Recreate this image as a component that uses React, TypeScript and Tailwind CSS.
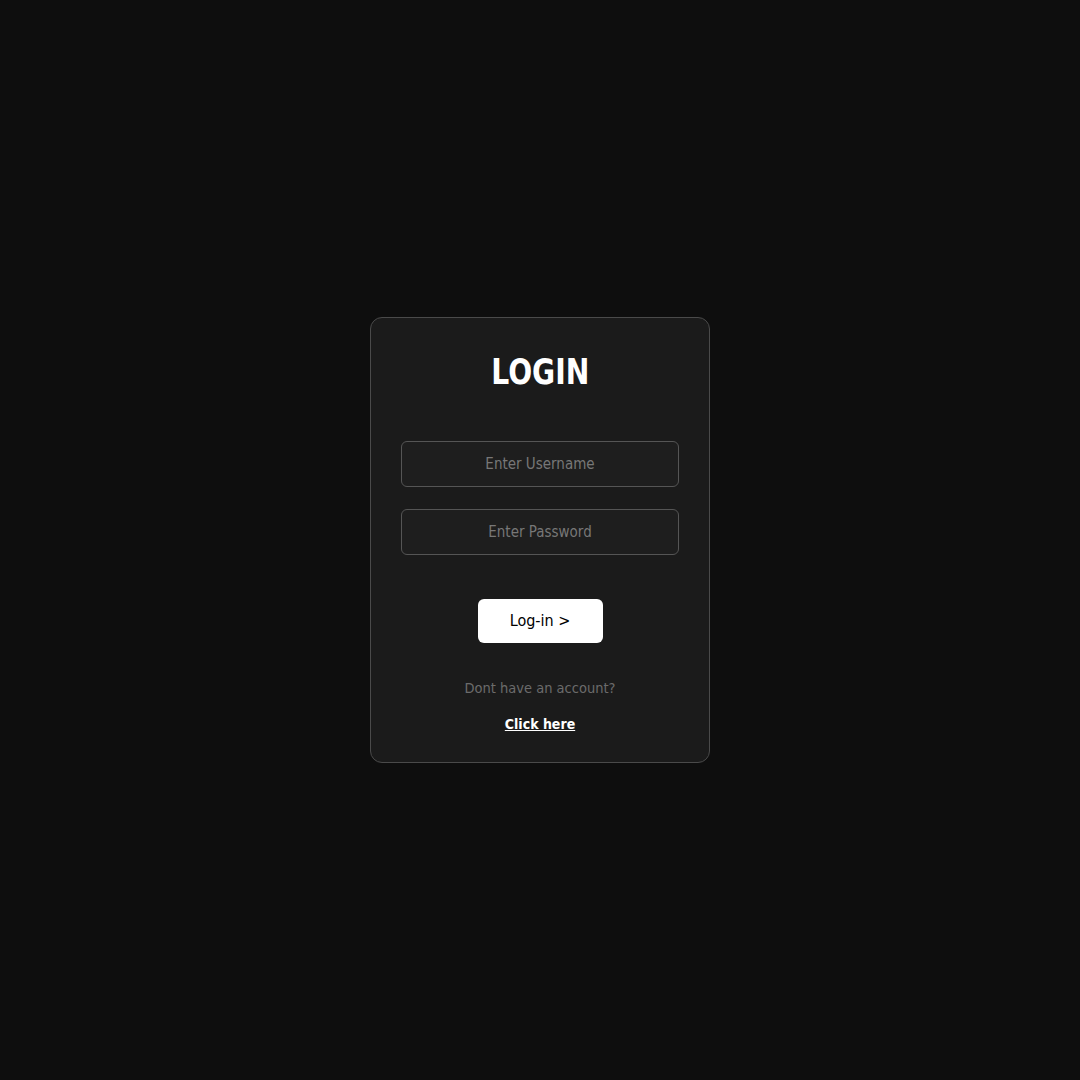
export default function App() {
  return (
    <div className="min-h-screen w-full bg-[#0e0e0e] flex items-center justify-center" style={{ fontFamily: "'DejaVu Sans Condensed', 'DejaVu Sans', sans-serif" }}>
      <div className="w-[340px] h-[446px] rounded-[12px] border border-[#4a4a4a] bg-[#1b1b1b] px-[30px] pt-[32px] flex flex-col items-center">
        <h1 className="text-[36px] leading-[43px] font-bold text-white scale-x-[0.87]">LOGIN</h1>
        <input
          className="mt-[48px] w-full h-[46px] rounded-[6px] border border-[#555] bg-[#1e1e1e] text-center text-[15px] text-white placeholder:text-[#777] outline-none"
          placeholder="Enter Username"
        />
        <input
          type="password"
          className="mt-[22px] w-full h-[46px] rounded-[6px] border border-[#555] bg-[#1e1e1e] text-center text-[15px] text-white placeholder:text-[#777] outline-none"
          placeholder="Enter Password"
        />
        <button className="mt-[44px] w-[125px] h-[44px] rounded-[6px] bg-white text-black text-[16px]">
          Log-in &gt;
        </button>
        <p className="mt-[35px] text-[14.5px] leading-[20px] text-[#6b6b6b]">Dont have an account?</p>
        <a className="mt-[16px] text-[14px] leading-[20px] font-bold text-white underline">Click here</a>
      </div>
    </div>
  );
}
